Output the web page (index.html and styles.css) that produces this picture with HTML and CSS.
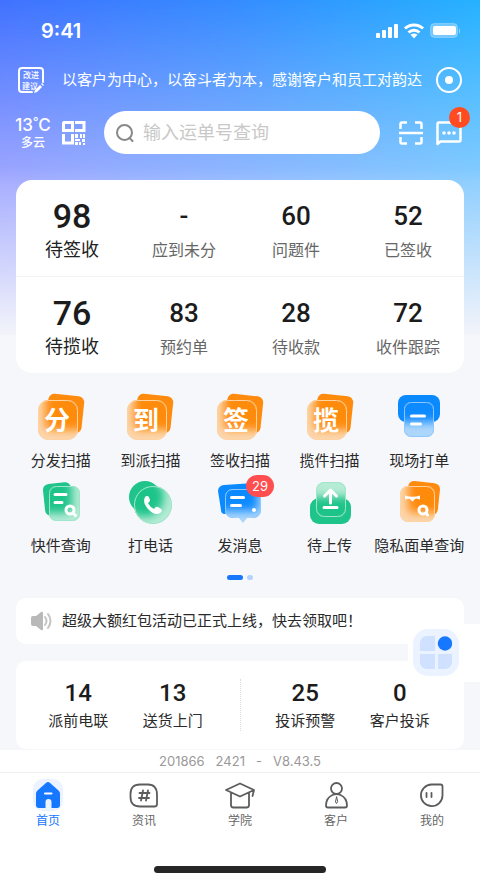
FILE: index.html
```html
<!DOCTYPE html>
<html lang="zh-CN">
<head>
<meta charset="utf-8">
<meta name="viewport" content="width=device-width, initial-scale=1">
<title>首页</title>
<link rel="stylesheet" href="styles.css">
</head>
<body>
<svg class="defs" aria-hidden="true">
  <defs>
    <filter id="soft" x="-50%" y="-50%" width="200%" height="200%"><feGaussianBlur stdDeviation="4"/></filter>
    <clipPath id="tile-clip"><rect x="1" y="8" width="40" height="40" rx="10"/></clipPath>
    <clipPath id="doc-clip"><rect x="12" y="9" width="31" height="35" rx="7"/></clipPath>
    <clipPath id="call-clip"><circle cx="27" cy="28" r="19"/></clipPath>
    <clipPath id="msg-clip"><path d="M17 12h20a8 8 0 0 1 8 8v13a8 8 0 0 1-8 8h-6l-4 5-4-5h-6a8 8 0 0 1-8-8V20a8 8 0 0 1 8-8z"/></clipPath>
    <clipPath id="up-clip"><rect x="10" y="5" width="30" height="35" rx="8"/></clipPath>
    <clipPath id="print-clip"><rect x="9" y="10" width="30" height="35" rx="7"/></clipPath>
    <clipPath id="priv-clip"><rect x="5" y="9" width="35" height="36" rx="8"/></clipPath>
  </defs>
  <symbol id="tile" viewBox="0 0 48 48">
    <rect x="10" y="3" width="36" height="37" rx="6" fill="#ff8b0e" transform="rotate(6 28 21)"/>
    <g clip-path="url(#tile-clip)">
      <rect width="48" height="48" fill="#fcd6ae"/>
      <rect x="8" y="0" width="44" height="38" rx="5" fill="#ff8b0e" filter="url(#soft)"/>
    </g>
    <rect x="1.500" y="8.500" width="39" height="39" rx="10" fill="none" stroke="#ffd3a0"/>
  </symbol>
</svg>

<div class="page">
  <header class="top">
    <div class="status">
      <span class="time">9:41</span>
      <svg width="88" height="18" viewBox="0 0 88 18" fill="#fff" aria-hidden="true">
        <rect x="1" y="11" width="4" height="5" rx="1"/><rect x="7" y="8" width="4" height="8" rx="1"/><rect x="13" y="5" width="4" height="11" rx="1"/><rect x="19" y="2" width="4" height="14" rx="1"/>
        <g fill="none" stroke="#fff" stroke-width="3"><path d="M30 6.500a13 13 0 0 1 18 0"/><path d="M33.500 10.500a8 8 0 0 1 11 0"/></g><path d="M35.500 12.800q3.500-2.600 7 0L39 16.500z"/>
        <rect x="55.500" y="1.500" width="27" height="14" rx="4" fill="#fff" fill-opacity=".3" stroke="#fff" stroke-opacity=".25"/><rect x="58" y="4" width="23" height="9" rx="2"/><path d="M84 6q2 3 0 6z" opacity=".5"/>
      </svg>
    </div>
    <div class="slogan-row">
      <button class="icon-btn" aria-label="改进建议">
        <svg width="28" height="28" viewBox="0 0 28 28" aria-hidden="true">
          <path d="M26 16V5a3 3 0 0 0-3-3H5a3 3 0 0 0-3 3v18a3 3 0 0 0 3 3h10" fill="none" stroke="#fff" stroke-width="2" stroke-linecap="round"/>
          <text x="14" y="12" class="stamp">改进</text><text x="13" y="23" class="stamp">建议</text>
          <path d="M17 27l1-3 5-5 2 2-5 5zM24 18l1-1 2 2-1 1z" fill="#fff"/>
        </svg>
      </button>
      <p class="slogan">以客户为中心，以奋斗者为本，感谢客户和员工对韵达</p>
      <button class="icon-btn" aria-label="录制">
        <svg width="28" height="28" viewBox="0 0 28 28" aria-hidden="true"><circle cx="14" cy="14" r="12" fill="none" stroke="#fff" stroke-width="2"/><circle cx="14" cy="14" r="4" fill="#fff"/></svg>
      </button>
    </div>
    <div class="search-row">
      <div class="weather"><span class="temp">13<span class="deg">°</span>C</span><span class="sky">多云</span></div>
      <button class="icon-btn" aria-label="二维码">
        <svg width="24" height="24" viewBox="0 0 24 24" aria-hidden="true">
          <g fill="none" stroke="#fff" stroke-width="3"><path d="M2 1.500h8.500v8H1.500V2zM13 1.500h9v8h-9M1.500 13v9h9V13"/></g>
          <path d="M13 13h3v4h-3zM18 13h2v4h-2zM21 13h2v4h-2zM13 18h5v2h-5zM13 21h3v3h-3zM17 21h2v3h-2zM20 18h3v3h-3zM21 22h2v2h-2z" fill="#fff"/>
        </svg>
      </button>
      <label class="search">
        <svg width="18" height="18" viewBox="0 0 18 18" fill="none" stroke="#888" stroke-width="2" aria-hidden="true"><circle cx="8.500" cy="8.500" r="7.500"/><path d="M13.500 14l3 3" stroke-linecap="round"/></svg>
        <input type="search" placeholder="输入运单号查询" aria-label="输入运单号查询">
      </label>
      <button class="icon-btn" aria-label="扫一扫">
        <svg width="24" height="24" viewBox="0 0 24 24" fill="none" stroke="#fff" stroke-width="2.500" aria-hidden="true"><path d="M1.500 8V3q0-1.500 1.500-1.500h5M16 1.500h5q1.500 0 1.500 1.500v5M22.500 16v5q0 1.500-1.500 1.500h-5M8 22.500H3q-1.500 0-1.500-1.500v-5M0 12h24"/></svg>
      </button>
      <button class="icon-btn message" aria-label="消息">
        <svg width="26" height="26" viewBox="0 0 26 26" aria-hidden="true"><path d="M1.500 24V4q0-1.500 1.500-1.500h20q1.500 0 1.500 1.500v16q0 1.500-1.500 1.500H4.500z" fill="none" stroke="#fff" stroke-width="2.500" stroke-linejoin="round"/><g fill="#fff"><circle cx="8" cy="13" r="1.800"/><circle cx="13" cy="13" r="1.800"/><circle cx="18" cy="13" r="1.800"/></g></svg>
        <span class="badge-round">1</span>
      </button>
    </div>
  </header>

  <main>
    <section class="stats">
      <a class="stat main-stat" href="#"><b>98</b><span>待签收</span></a>
      <a class="stat" href="#"><b>-</b><span>应到未分</span></a>
      <a class="stat" href="#"><b>60</b><span>问题件</span></a>
      <a class="stat" href="#"><b>52</b><span>已签收</span></a>
      <a class="stat main-stat" href="#"><b>76</b><span>待揽收</span></a>
      <a class="stat" href="#"><b>83</b><span>预约单</span></a>
      <a class="stat" href="#"><b>28</b><span>待收款</span></a>
      <a class="stat" href="#"><b>72</b><span>收件跟踪</span></a>
    </section>

    <section class="apps">
      <a class="app" href="#"><svg viewBox="0 0 48 48" aria-hidden="true"><use href="#tile"/><text x="20" y="38" class="glyph">分</text></svg><span>分发扫描</span></a>
      <a class="app" href="#"><svg viewBox="0 0 48 48" aria-hidden="true"><use href="#tile"/><text x="20" y="38" class="glyph">到</text></svg><span>到派扫描</span></a>
      <a class="app" href="#"><svg viewBox="0 0 48 48" aria-hidden="true"><use href="#tile"/><text x="20" y="38" class="glyph">签</text></svg><span>签收扫描</span></a>
      <a class="app" href="#"><svg viewBox="0 0 48 48" aria-hidden="true"><use href="#tile"/><text x="20" y="38" class="glyph">揽</text></svg><span>揽件扫描</span></a>
      <a class="app" href="#"><svg viewBox="0 0 48 48" aria-hidden="true">
        <rect x="3" y="3" width="42" height="27" rx="8" fill="#0b8aff"/>
        <g clip-path="url(#print-clip)"><rect width="48" height="48" fill="#add6fd"/><rect x="-4" y="-4" width="56" height="34" fill="#0b8aff" filter="url(#soft)"/></g>
        <rect x="9.500" y="10.500" width="29" height="34" rx="7" fill="none" stroke="#8cc8ff"/>
        <path d="M16.500 24h13M16.500 32h9" stroke="#fff" stroke-width="3" stroke-linecap="round"/></svg><span>现场打单</span></a>
      <a class="app" href="#"><svg viewBox="0 0 48 48" aria-hidden="true">
        <rect x="7" y="6" width="28" height="32" rx="6" fill="#1ec48a" transform="rotate(-6 21 22)"/>
        <g clip-path="url(#doc-clip)"><rect width="48" height="48" fill="#b6ebd5"/><rect x="2" y="2" width="33" height="34" rx="6" fill="#1ec48a" filter="url(#soft)"/></g>
        <rect x="12.500" y="9.500" width="30" height="34" rx="7" fill="none" stroke="#a0e5c9"/>
        <path d="M18 17.500h11M18 25.500h7" stroke="#fff" stroke-width="3" stroke-linecap="round"/>
        <g fill="none" stroke="#fff" stroke-width="3"><circle cx="33" cy="33" r="4"/><path d="M36 36l2.500 2.500" stroke-linecap="round"/></g></svg><span>快件查询</span></a>
      <a class="app" href="#"><svg viewBox="0 0 48 48" aria-hidden="true">
        <circle cx="19" cy="20" r="16" fill="#1ec48a"/>
        <g clip-path="url(#call-clip)"><rect width="48" height="48" fill="#b6ebd5"/><circle cx="18" cy="20" r="20" fill="#1ec48a" filter="url(#soft)"/></g>
        <circle cx="27" cy="28" r="18.500" fill="none" stroke="#a0e5c9"/>
        <path d="M19 20q2-2 4 0l1 3q0 2-2 3 2 4 6 6 2-3 4-2l3 2q2 2-1 4-5 3-11-3-7-7-4-13z" fill="#fff"/></svg><span>打电话</span></a>
      <a class="app" href="#"><svg viewBox="0 0 48 48" aria-hidden="true">
        <path d="M8 8l30-2a5 5 0 0 1 5 5l1 19-36 7a4 4 0 0 1-3-4L2 14a6 6 0 0 1 6-6z" fill="#0b8aff"/>
        <g clip-path="url(#msg-clip)"><rect width="48" height="48" fill="#add6fd"/><rect x="-2" y="-4" width="44" height="38" fill="#0b8aff" filter="url(#soft)"/></g>
        <path d="M17 12.500h20q7.500 0 7.500 8v12q0 8-8 8M17 12.500q-7.500 0-7.500 8v12q0 8 8 8" fill="none" stroke="#8cc8ff"/>
        <path d="M15.500 20.500h12M15.500 28.500h9" stroke="#fff" stroke-width="3" stroke-linecap="round"/><circle cx="38" cy="33" r="2" fill="#fff"/></svg><i class="badge-pill">29</i><span>发消息</span></a>
      <a class="app" href="#"><svg viewBox="0 0 48 48" aria-hidden="true">
        <rect x="4" y="21" width="41" height="26" rx="9" fill="#1ec48a"/>
        <g clip-path="url(#up-clip)"><rect width="48" height="48" fill="#b6ebd5"/><rect x="-4" y="20" width="56" height="36" fill="#1ec48a" filter="url(#soft)"/></g>
        <rect x="10.500" y="5.500" width="29" height="34" rx="8" fill="none" stroke="#a0e5c9"/>
        <path d="M18.500 19l6-6 6 6M24.500 14v12M18 30.500h13" fill="none" stroke="#fff" stroke-width="3" stroke-linecap="round" stroke-linejoin="round"/></svg><span>待上传</span></a>
      <a class="app" href="#"><svg viewBox="0 0 48 48" aria-hidden="true">
        <rect x="12" y="5" width="32" height="32" rx="6" fill="#ff8b0e" transform="rotate(6 28 21)"/>
        <g clip-path="url(#priv-clip)"><rect width="48" height="48" fill="#fcd6ae"/><rect x="13" y="0" width="40" height="36" rx="5" fill="#ff8b0e" filter="url(#soft)"/></g>
        <rect x="5.500" y="9.500" width="34" height="35" rx="8" fill="none" stroke="#ffd3a0"/>
        <path d="M10 18.500q7.500 2.500 15 0v4l-4-1-1.500 1-2 2-2-2-1.500-1-4 1z" fill="#fff"/>
        <g fill="none" stroke="#fff" stroke-width="3"><circle cx="28" cy="33" r="4"/><path d="M31 36l1.500 2" stroke-linecap="round"/></g></svg><span>隐私面单查询</span></a>
    </section>
    <div class="pager"><i class="on"></i><i></i></div>

    <div class="feed">
      <a class="notice" href="#">
        <svg width="22" height="20" viewBox="0 0 22 20" aria-hidden="true"><path d="M2 5h3l5-4q2-1 2 1v16q0 2-2 1l-5-4H2q-2 0-2-2V7q0-2 2-2z" fill="#b9b9b9"/><path d="M14 6q3 4 0 8M17 3q5 7 0 14" fill="none" stroke="#c4c4c4" stroke-width="2" stroke-linecap="round"/></svg>
        <span>超级大额红包活动已正式上线，快去领取吧！</span>
      </a>
      <section class="tasks">
        <div class="half"><a class="task" href="#"><b>14</b><span>派前电联</span></a><a class="task" href="#"><b>13</b><span>送货上门</span></a></div>
        <div class="half"><a class="task" href="#"><b>25</b><span>投诉预警</span></a><a class="task" href="#"><b>0</b><span>客户投诉</span></a></div>
      </section>
      <div class="float">
        <button aria-label="更多应用"><svg width="32" height="33" viewBox="0 0 32 33" aria-hidden="true"><g fill="#cfe1ff"><path d="M0 15V7a7 7 0 0 1 7-7h8v15zM0 18h15v15H7a7 7 0 0 1-7-7zM18 18h14v8a7 7 0 0 1-7 7h-7z"/></g><circle cx="25" cy="7.500" r="7.200" fill="#1677ff"/></svg></button>
      </div>
    </div>
  </main>

  <footer>
    <p class="version"><span>201866</span><span>2421</span><span>-</span><span>V8.43.5</span></p>
    <nav class="tabs">
      <a class="tab active" href="#"><svg viewBox="0 0 32 32" aria-hidden="true"><rect x="1" y="0" width="30" height="32" rx="10" fill="#eaf3ff"/><path d="M14.500 3.500q1.500-1 3 0l9 8q1.500 1.300 1.500 3V26q0 3-3 3h-5.500v-6a3 3 0 0 0-6 0v6H7q-3 0-3-3V14.500q0-1.700 1.500-3z" fill="#1677ff"/><path d="M13 14.500h6.500" stroke="#fff" stroke-width="2" stroke-linecap="round"/></svg>首页</a>
      <a class="tab" href="#"><svg viewBox="0 0 32 32" class="line" aria-hidden="true"><path d="M12 5.500h8q9 0 9 10V25q0 2.500-2.500 2.500H12q-9.500 0-9.500-9.500v-3q0-9.500 9.500-9.500z"/><path d="M15 11.500l-2 10M20 11.500l-2 10M11.500 14h10M11 19h10"/></svg>资讯</a>
      <a class="tab" href="#"><svg viewBox="0 0 32 32" class="line" aria-hidden="true"><path d="M16 4.500l14 6.500-14 6.500L2 11zM7 14v12q0 2.500 2.500 2.500h13q2.500 0 2.500-2.500V14M30 11l-1.500 6"/></svg>学院</a>
      <a class="tab" href="#"><svg viewBox="0 0 32 32" class="line" aria-hidden="true"><circle cx="16.500" cy="9.500" r="5.500"/><path d="M12.500 16C8 18 6 22 6 26.500q0 2 2 2h17q2 0 2-2c0-4.500-2-8.500-6.500-10.500-2.500-1-5.500-1-8 0z"/><path d="M16.500 18l-1 5 1 1.500 1-1.500z" stroke-width="1"/></svg>客户</a>
      <a class="tab" href="#"><svg viewBox="0 0 32 32" class="line" aria-hidden="true"><path d="M15.500 5.500h9q2 0 2 2v9a10.800 10.800 0 1 1-11-11z"/><path d="M10.500 14v4M15.500 14v4"/></svg>我的</a>
    </nav>
    <div class="home-bar"></div>
  </footer>
</div>
</body>
</html>
```
FILE: styles.css
```css
* { box-sizing: border-box; }

body {
  margin: 0;
  background: #f6f7fa;
  color: #2a2a2a;
  font-family: "Inter", "Noto Sans CJK SC", sans-serif;
  font-size: 15px;
  line-height: 22px;
}

a { color: inherit; text-decoration: none; }
p { margin: 0; }
button { border: 0; padding: 0; background: none; font: inherit; color: inherit; }
svg { display: block; flex: none; }
.defs { position: absolute; width: 0; height: 0; }

.page {
  position: relative;
  z-index: 0;
  min-height: 100vh;
  display: flex;
  flex-direction: column;
}

/* Sky behind the header: two horizontal tints blended downwards, then faded out */
.page::before,
.page::after {
  content: "";
  position: absolute;
  inset: 0 0 auto;
  height: 335px;
  z-index: -2;
  background: linear-gradient(90deg, #4172ff, #348dff 50%, #26b2ff);
}
.page::after {
  z-index: -1;
  background: linear-gradient(180deg, transparent 50%, #f3f4fa), linear-gradient(90deg, #a2a8ff, #87ccff);
  mask-image: linear-gradient(180deg, transparent, #000 55%);
}

.top { color: #fff; }
.status {
  display: flex;
  align-items: center;
  justify-content: space-between;
  height: 62px;
  padding: 0 17px 0 41px;
}
.time { font-size: 20px; font-weight: 600; }
.slogan-row {
  display: flex;
  align-items: center;
  height: 36px;
  padding: 0 17px;
}
.slogan {
  flex: 1;
  margin: 0 12px 0 17px;
  overflow: hidden;
  white-space: nowrap;
}
.icon-btn { position: relative; flex: none; }
.stamp { font-size: 8px; font-weight: 500; fill: #fff; text-anchor: middle; }

.search-row {
  display: flex;
  align-items: center;
  margin-top: 13px;
  padding: 0 18px 0 15px;
}
.weather {
  display: flex;
  flex-direction: column;
  align-items: center;
  width: 36px;
  margin-right: 11px;
}
.temp { font-size: 17px; line-height: 20px; font-weight: 500; white-space: nowrap; }
.deg { font-size: 12px; vertical-align: top; line-height: 14px; }
.sky { font-size: 12px; line-height: 16px; font-weight: 500; }
.search {
  flex: 1;
  min-width: 0;
  display: flex;
  align-items: center;
  gap: 9px;
  height: 43px;
  margin: 0 19px 0 18px;
  padding: 0 12px;
  border-radius: 22px;
  background: #fff;
}
.search input {
  flex: 1;
  min-width: 0;
  border: 0;
  padding: 0;
  outline: 0;
  background: none;
  font: inherit;
  font-size: 18px;
}
.search input::placeholder { color: #c8c8c8; opacity: 1; }
.message { margin-left: 13px; }
.badge-round {
  position: absolute;
  top: -13px;
  right: -8px;
  width: 21px;
  height: 21px;
  border-radius: 50%;
  background: #ff4b1f;
  font-size: 13px;
  line-height: 21px;
}

main { flex: 1; }
.stats {
  display: grid;
  grid-template-columns: repeat(4, 1fr);
  margin: 26px 16px 0;
  border-radius: 16px;
  background: #fff;
}
.stat {
  display: flex;
  flex-direction: column;
  align-items: center;
  height: 96px;
  padding-top: 18px;
  font-size: 16px;
  color: #666;
}
.stat:nth-child(-n+4) { height: 97px; border-bottom: 1px solid #f3f4f6; }
.stat b, .task b {
  font-family: "Roboto", sans-serif;
  font-weight: 500;
  color: #1c1c1c;
}
.stat b { font-size: 26px; line-height: 36px; margin-bottom: 5px; }
.main-stat { font-size: 18px; color: #222; }
.main-stat b { font-size: 34px; }

.apps {
  display: grid;
  grid-template-columns: repeat(5, 1fr);
  row-gap: 5px;
  padding: 19px 16px 0;
}
.app {
  position: relative;
  display: flex;
  flex-direction: column;
  align-items: center;
  gap: 10px;
  min-width: 0;
  white-space: nowrap;
}
.app svg { width: 48px; height: 48px; }
.glyph { font-size: 26px; font-weight: 700; fill: #fff; text-anchor: middle; }
.badge-pill {
  position: absolute;
  top: -2px;
  left: calc(50% + 6px);
  width: 28px;
  height: 22px;
  border-radius: 11px;
  background: #ff4d50;
  color: #fff;
  font-size: 13px;
  font-style: normal;
  text-align: center;
}

.pager { display: flex; justify-content: center; gap: 4px; margin-top: 18px; }
.pager i { width: 6px; height: 5px; border-radius: 3px; background: #b5d2fd; }
.pager .on { width: 16px; background: #1677ff; }

.feed { position: relative; padding: 18px 16px 1px; }
.notice {
  display: flex;
  align-items: center;
  gap: 9px;
  height: 46px;
  padding: 0 15px;
  border-radius: 10px;
  background: #fff;
}
.tasks {
  display: flex;
  height: 88px;
  margin-top: 17px;
  padding: 18px 0;
  border-radius: 10px;
  background: #fff;
}
.half {
  flex: 1;
  display: flex;
  padding: 0 20px 0 15px;
}
.half + .half {
  padding: 0 17px;
  border-left: 1px dotted #dcdcdc;
}
.task { flex: 1; display: flex; flex-direction: column; align-items: center; }
.task b { font-size: 24px; line-height: 28px; margin-bottom: 3px; }
.float {
  position: absolute;
  top: 44px;
  right: 0;
  padding: 5px 21px 6px 5px;
  border-radius: 10px 0 0 10px;
  background: #fff;
}
.float button {
  display: grid;
  place-items: center;
  width: 46px;
  height: 47px;
  border-radius: 15px;
  background: #eaf3ff;
}

footer { background: #fff; }
.version {
  display: flex;
  justify-content: center;
  gap: 11px;
  border-bottom: 1px solid #f0f0f0;
  color: #999;
  font-size: 13px;
}
.tabs { display: flex; padding-top: 6px; }
.tab {
  flex: 1;
  display: flex;
  flex-direction: column;
  align-items: center;
  color: #666;
  font-size: 12px;
  line-height: 20px;
}
.tab svg { width: 32px; height: 32px; }
.active { color: #1677ff; }
.line { fill: none; stroke: #5c5c5c; stroke-width: 1.8; stroke-linecap: round; stroke-linejoin: round; }
.home-bar {
  width: 36%;
  height: 7px;
  margin: 35px auto 10px;
  border-radius: 4px;
  background: #262626;
}
```
